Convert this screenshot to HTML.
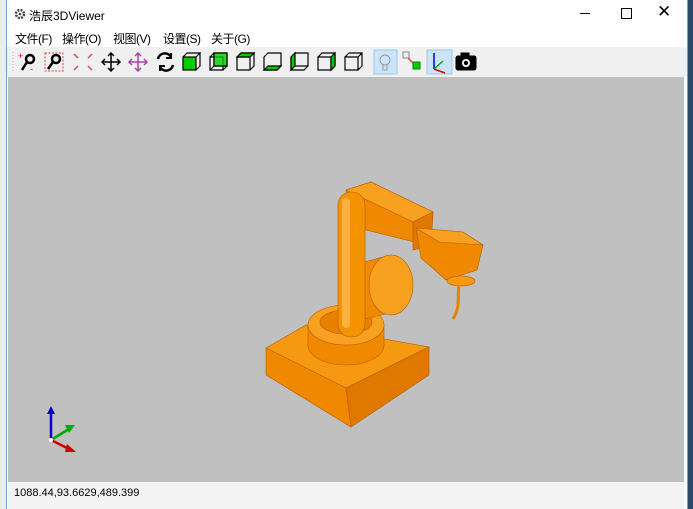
<!DOCTYPE html>
<html><head><meta charset="utf-8"><style>
body{margin:0;width:693px;height:509px;position:relative;overflow:hidden;background:#dfe6ee;font-family:"Liberation Sans","Noto Sans CJK SC",sans-serif;font-size:12px}
.win{position:absolute;left:6px;top:0;width:680px;height:509px;background:#fff;border-left:1px solid #7a9cc8;border-right:1px solid #7a9cc8}
.title{position:absolute;left:22px;top:7px;font-size:12px;color:#000}
.menu{position:absolute;top:30px;left:8px;font-size:12px;white-space:nowrap;letter-spacing:-0.5px}
.menu span{position:absolute;top:0}
.tb{position:absolute;left:0;top:47px;width:680px;height:30px;background:#f0f0f0}
.view{position:absolute;left:1px;top:77px;width:676px;height:405px;background:#c0c0c0}
.status{position:absolute;left:1px;top:482px;width:676px;height:27px;background:#f3f3f3;font-size:11px}
</style></head><body>
<div style="position:absolute;left:0;top:0;width:6px;height:509px;background:#e8edf2"></div>
<div style="position:absolute;left:687px;top:0;width:6px;height:509px;background:#2b4a6a"></div>
<div class="win">
<svg style="position:absolute;left:7px;top:8px" width="12" height="12" viewBox="0 0 12 12"><circle cx="6" cy="6" r="4" fill="none" stroke="#444" stroke-width="2.5" stroke-dasharray="2 1.2"/><circle cx="6" cy="6" r="1.3" fill="#444"/></svg>
<div class="title">浩辰3DViewer</div>
<div style="position:absolute;left:573px;top:13px;width:10px;height:1px;background:#000"></div>
<div style="position:absolute;left:614px;top:8px;width:9px;height:9px;border:1px solid #000"></div>
<div style="position:absolute;left:650px;top:2px;font-size:17px">✕</div>
<div class="menu"><span style="left:0">文件(F)</span><span style="left:47px">操作(O)</span><span style="left:98px">视图(V)</span><span style="left:148px">设置(S)</span><span style="left:196px">关于(G)</span></div>
<div class="tb">
<svg width="680" height="30" viewBox="0 0 680 30">
<g stroke="#000" fill="none">
<line x1="6" y1="5" x2="6" y2="26" stroke="#bbb" stroke-dasharray="1 2"/>
<circle cx="23" cy="12" r="4" stroke-width="2.5"/><line x1="20" y1="15" x2="15" y2="23" stroke-width="2.5"/>
<text x="11" y="12" fill="#d00" stroke="none" font-size="9">+</text><text x="23" y="25" fill="#d00" stroke="none" font-size="9">-</text>
<rect x="38" y="6" width="18" height="18" stroke="#d44" stroke-dasharray="2 1.5"/>
<circle cx="49" cy="12" r="4" stroke-width="2.5"/><line x1="46" y1="15" x2="41" y2="22" stroke-width="2.5"/>
<g stroke="#d44" stroke-width="1.3"><path d="M67 7l4 4M85 7l-4 4M67 23l4-4M85 23l-4-4"/></g>
<g stroke-width="1.5"><path d="M104 6v18M95 15h18M101 9l3-3 3 3M101 21l3 3 3-3M98 12l-3 3 3 3M110 12l3 3-3 3"/></g>
<g stroke="#a4a" stroke-width="1.5"><path d="M131 6v18M122 15h18M128 9l3-3 3 3M128 21l3 3 3-3M125 12l-3 3 3 3M137 12l3 3-3 3"/></g>
<path d="M151 12a7 7 0 0 1 13-2M166 18a7 7 0 0 1-13 2" stroke-width="2.5"/>
<path d="M164 6v5h-5M153 24v-5h5" stroke-width="2"/>
<g stroke-width="1.2">
<rect x="176" y="10" width="13" height="13" fill="#0c0"/><path d="M176 10l4-4h13l-4 4M193 6v13l-4 4"/>
<path d="M203 10h13v13h-13zM203 10l4-4h13v13l-4 4M207 6v13h13M207 19l-4 4"/><rect x="207" y="6" width="13" height="13" fill="#0c0" fill-opacity=".8"/>
<path d="M230 10h13v13h-13zM230 10l4-4h13l-4 4M247 6v13l-4 4"/><path d="M230 10l4-4h13l-4 4z" fill="#0c0"/>
<path d="M257 10l4-4h13v13l-4 4h-13z"/><path d="M257 23l4-4h13l-4 4z" fill="#0c0"/>
<path d="M284 10l4-4h13v13l-4 4h-13z"/><path d="M284 10l4-4v13l-4 4z" fill="#0c0"/><path d="M288 19h13"/>
<path d="M311 10h13v13h-13zM311 10l4-4h13v13l-4 4M328 6l-4 4"/><path d="M324 10l4-4v13l-4 4z" fill="#0c0"/>
<path d="M338 10h13v13h-13zM338 10l4-4h13v13l-4 4M355 6l-4 4"/>
</g>
<rect x="367" y="3" width="23" height="24" fill="#cce4f7" stroke="#99c9ef"/>
<circle cx="378" cy="13" r="5" stroke="#999"/><rect x="376" y="18" width="4" height="5" stroke="#999"/>
<rect x="396" y="5" width="6" height="6" stroke="#888"/><line x1="401" y1="11" x2="407" y2="17" stroke="#d44" stroke-width="1.5"/><rect x="406" y="15" width="7" height="7" fill="#0c0" stroke="#080"/>
<rect x="420" y="3" width="25" height="24" fill="#cce4f7" stroke="#99c9ef"/>
<line x1="427" y1="22" x2="427" y2="6" stroke="#00c" stroke-width="1.5"/><line x1="427" y1="22" x2="436" y2="14" stroke="#0a0" stroke-width="1.5"/><line x1="427" y1="22" x2="438" y2="26" stroke="#d00" stroke-width="1.5"/>
<rect x="449" y="9" width="20" height="14" rx="2" fill="#000"/><rect x="454" y="6" width="8" height="4" fill="#000"/><circle cx="459" cy="16" r="4" fill="#fff" stroke="none"/><circle cx="459" cy="16" r="2.2" fill="#000" stroke="none"/>
</g></svg>
</div>
<div class="view">
<svg width="676" height="405" viewBox="7 77 676 405">
<g stroke="#b85a00" stroke-width=".6">
<path d="M265 348L305 325L428 347L345 388Z" fill="#f59a10"/>
<path d="M265 348L345 388L350 427L265 375Z" fill="#f08800"/>
<path d="M345 388L428 347L428 375L350 427Z" fill="#e07800"/>
<path d="M307 325v20a38 20 0 0 0 76 0v-20z" fill="#f08800"/>
<ellipse cx="345" cy="325" rx="38" ry="20" fill="#f8a020"/>
<ellipse cx="345" cy="322" rx="26" ry="12" fill="#e88000"/>
<path d="M352 265L390 255L400 310L360 320Z" fill="#ef8a00"/>
<ellipse cx="390" cy="285" rx="22" ry="30" fill="#f8a020"/>
<path d="M345 190L370 182L432 212L430 246L365 230L352 215Z" fill="#f08800"/>
<path d="M345 190L370 182L432 212L412 222Z" fill="#f8a020"/>
<path d="M412 222L432 212L430 246L412 250Z" fill="#e07800"/>
<path d="M415 228L462 232L482 245L476 270L445 280L420 258Z" fill="#f08800"/>
<path d="M415 228L462 232L482 245L438 242Z" fill="#f8a020"/>
<ellipse cx="460" cy="281" rx="14" ry="5" fill="#f59a10"/>
<path d="M458 285c-2 10 2 22-6 34" fill="none" stroke="#e88000" stroke-width="3"/>
<rect x="337" y="192" width="27" height="145" rx="13" fill="#f39300"/>
<rect x="341" y="198" width="8" height="130" rx="4" fill="#ffb040" stroke="none"/>
</g>
<g stroke-width="2.5">
<line x1="50" y1="440" x2="50" y2="412" stroke="#00c"/><path d="M46 414l4-8 4 8z" fill="#00c"/>
<line x1="50" y1="440" x2="68" y2="429" stroke="#0a0"/><path d="M64 425l10 0-6 8z" fill="#0a0"/>
<line x1="50" y1="440" x2="68" y2="449" stroke="#c00"/><path d="M66 444l9 8-11 0z" fill="#c00"/>
</g>
<circle cx="50" cy="440" r="2" fill="#fff"/>
</svg>
</div>
<div class="status"><span style="position:absolute;left:6px;top:5px">1088.44,93.6629,489.399</span></div>
</div>
</body></html>
